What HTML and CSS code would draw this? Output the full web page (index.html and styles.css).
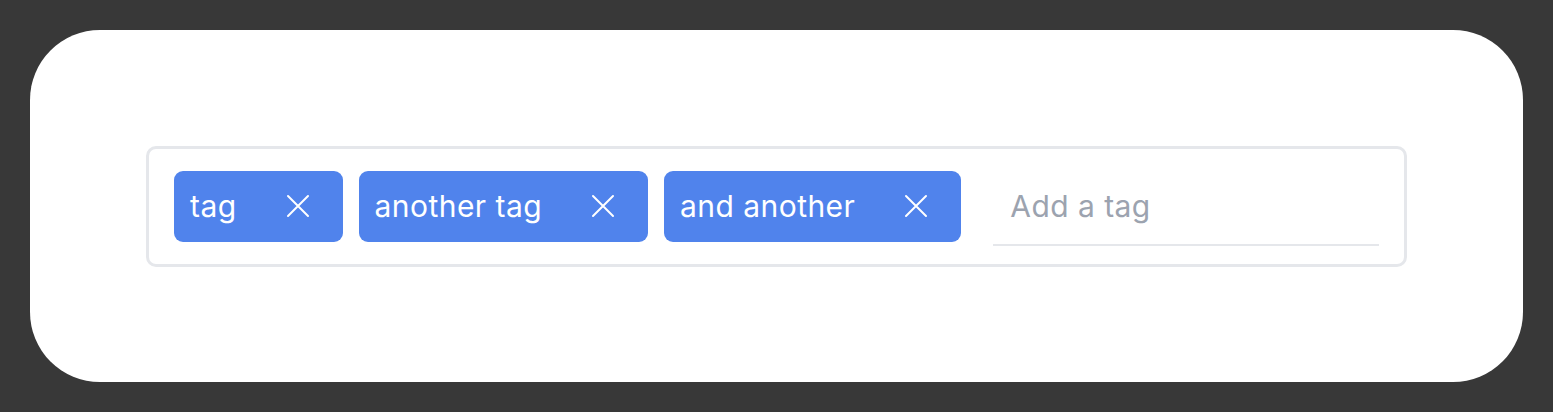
FILE: index.html
```html
<!DOCTYPE html>
<html lang="en">
<head>
<meta charset="utf-8">
<title>Tags input</title>
<link rel="stylesheet" href="styles.css">
</head>
<body>
<div class="card">
  <div class="tags-input">
    <span class="tag"><span class="tag-label">tag</span><button class="tag-remove" aria-label="Remove tag"><svg viewBox="0 0 24 24" width="24" height="24"><path d="M2 2L22 22M22 2L2 22"/></svg></button></span>
    <span class="tag"><span class="tag-label">another tag</span><button class="tag-remove" aria-label="Remove tag"><svg viewBox="0 0 24 24" width="24" height="24"><path d="M2 2L22 22M22 2L2 22"/></svg></button></span>
    <span class="tag"><span class="tag-label">and another</span><button class="tag-remove" aria-label="Remove tag"><svg viewBox="0 0 24 24" width="24" height="24"><path d="M2 2L22 22M22 2L2 22"/></svg></button></span>
    <input class="tag-field" type="text" placeholder="Add a tag">
  </div>
</div>
</body>
</html>
```
FILE: styles.css
```css
html, body {
  margin: 0;
  padding: 0;
}
body {
  background: #383838;
  padding: 30px;
  font-family: Inter, "Noto Sans", sans-serif;
}
.card {
  background: #ffffff;
  border-radius: 70px;
  padding: 116px;
  height: 352px;
  box-sizing: border-box;
}
.tags-input {
  display: flex;
  align-items: center;
  gap: 16px;
  border: 3px solid #e5e7eb;
  border-radius: 10px;
  padding: 18px 25px;
  height: 121px;
  box-sizing: border-box;
}
.tag {
  display: flex;
  flex-shrink: 0;
  align-items: center;
  height: 71px;
  margin-top: -1px;
  background: #5083ec;
  color: #ffffff;
  border-radius: 9px;
  padding: 0 33px 0 16px;
  font-size: 30px;
  letter-spacing: 0.45px;
  line-height: 1;
  white-space: nowrap;
}
.tag-remove {
  display: flex;
  flex-shrink: 0;
  align-items: center;
  justify-content: center;
  margin-left: 49px;
  padding: 0;
  border: 0;
  background: transparent;
  width: 24px;
  height: 24px;
  cursor: pointer;
}
.tag-remove svg {
  display: block;
}
.tag-remove path {
  stroke: #ffffff;
  stroke-width: 2;
  stroke-linecap: round;
  fill: none;
}
.tag-field {
  flex-shrink: 0;
  margin-left: 16px;
  width: 386px;
  height: 79px;
  box-sizing: border-box;
  border: 0;
  border-bottom: 2px solid #e5e7eb;
  padding: 0 0 0 17px;
  font-family: Inter, "Noto Sans", sans-serif;
  font-size: 30px;
  letter-spacing: 0.45px;
  color: #111827;
  outline: none;
  background: transparent;
}
.tag-field::placeholder {
  color: #9ca3af;
}
```
